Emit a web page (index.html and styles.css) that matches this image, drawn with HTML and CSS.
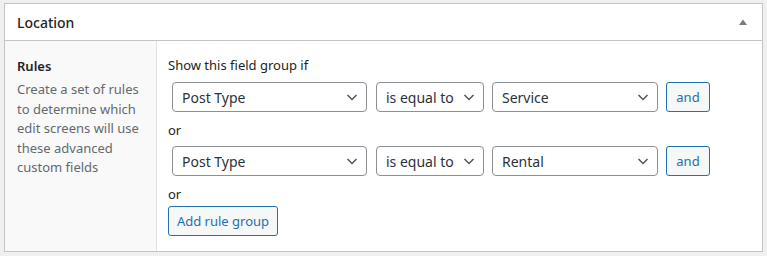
FILE: index.html
```html
<!DOCTYPE html>
<html lang="en">
<head>
    <meta charset="UTF-8">
    <title>Location</title>
    <link rel="stylesheet" href="styles.css">
</head>
<body>
    <div class="postbox">
        <div class="postbox-header">
            <h2>Location</h2>
            <svg class="toggle" width="10" height="8" viewBox="0 0 10 8"><path d="M1 7 L5 1.5 L9 7 Z" fill="#787c82"/></svg>
        </div>

        <div class="inside">
            <div class="label-col">
                <div class="label">Rules</div>
                <p class="description">Create a set of rules to determine which edit screens will use these advanced custom fields</p>
            </div>

            <div class="input-col">
                <div class="group-title">Show this field group if</div>

                <div class="rule">
                    <div class="select param">Post Type
                        <svg width="16" height="16" viewBox="0 0 16 16"><path d="M3.5 6 L8 10.5 L12.5 6" fill="none" stroke="#50575e" stroke-width="1.5"/></svg>
                    </div>
                    <div class="select operator">is equal to
                        <svg width="16" height="16" viewBox="0 0 16 16"><path d="M3.5 6 L8 10.5 L12.5 6" fill="none" stroke="#50575e" stroke-width="1.5"/></svg>
                    </div>
                    <div class="select value">Service
                        <svg width="16" height="16" viewBox="0 0 16 16"><path d="M3.5 6 L8 10.5 L12.5 6" fill="none" stroke="#50575e" stroke-width="1.5"/></svg>
                    </div>
                    <button class="button and">and</button>
                </div>

                <div class="or">or</div>

                <div class="rule">
                    <div class="select param">Post Type
                        <svg width="16" height="16" viewBox="0 0 16 16"><path d="M3.5 6 L8 10.5 L12.5 6" fill="none" stroke="#50575e" stroke-width="1.5"/></svg>
                    </div>
                    <div class="select operator">is equal to
                        <svg width="16" height="16" viewBox="0 0 16 16"><path d="M3.5 6 L8 10.5 L12.5 6" fill="none" stroke="#50575e" stroke-width="1.5"/></svg>
                    </div>
                    <div class="select value">Rental
                        <svg width="16" height="16" viewBox="0 0 16 16"><path d="M3.5 6 L8 10.5 L12.5 6" fill="none" stroke="#50575e" stroke-width="1.5"/></svg>
                    </div>
                    <button class="button and">and</button>
                </div>

                <div class="or last">or</div>

                <button class="button add-group">Add rule group</button>
            </div>
        </div>
    </div>
</body>
</html>
```

FILE: styles.css
```css
body {
    margin: 3px 4px;
    background-color: #f0f0f1;
    font-family: "Noto Sans", "Open Sans", sans-serif;
    font-size: 13px;
    color: #1d2327;
}

.postbox {
    background-color: #ffffff;
    border: 1px solid #c3c4c7;
}

.postbox-header {
    display: flex;
    align-items: center;
    justify-content: space-between;
    height: 36px;
    padding: 0 12px;
    border-bottom: 1px solid #c3c4c7;
}

.postbox-header h2 {
    margin: 0;
    font-size: 14px;
    font-weight: 500;
}

.toggle {
    margin-right: 2px;
}

.inside {
    display: flex;
    height: 210px;
}

.label-col {
    width: 127px;
    padding: 15px 12px;
    background-color: #f9f9f9;
    border-right: 1px solid #e1e1e1;
}

.label {
    font-weight: 600;
    line-height: 20px;
}

.description {
    margin: 4px 0 0;
    color: #646970;
    line-height: 19.5px;
}

.input-col {
    flex: 1;
    padding: 14px 11px;
}

.group-title {
    line-height: 20px;
    margin-bottom: 7px;
}

.rule {
    display: flex;
    padding-left: 4px;
}

.select {
    box-sizing: border-box;
    display: flex;
    align-items: center;
    justify-content: space-between;
    height: 30px;
    margin-right: 8px;
    padding: 0 6px 0 9px;
    border: 1px solid #8c8f94;
    border-radius: 4px;
    color: #2c3338;
    font-size: 14px;
}

.param {
    width: 195px;
    margin-right: 9px;
}

.operator {
    width: 108px;
}

.value {
    width: 166px;
}

.button {
    box-sizing: border-box;
    height: 30px;
    padding: 0 10px;
    border: 1px solid #2271b1;
    border-radius: 3px;
    background-color: #f6f7f7;
    color: #2271b1;
    font-family: inherit;
    font-size: 13px;
    cursor: pointer;
}

.and {
    width: 44px;
    padding: 0;
}

.or {
    line-height: 20px;
    margin: 8px 0 6px;
}

.or.last {
    margin: 8px 0 2px;
}

.add-group {
    width: 110px;
    padding: 0;
}
```
